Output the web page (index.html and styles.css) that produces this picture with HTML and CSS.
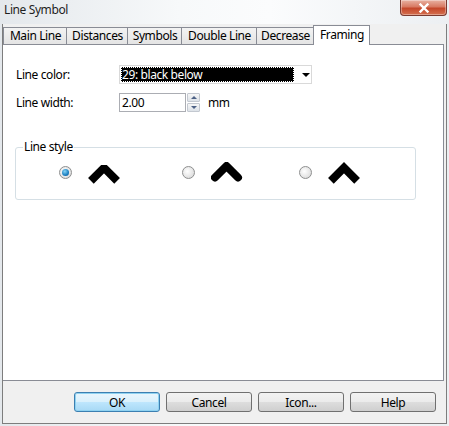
FILE: index.html
```html
<!DOCTYPE html>
<html lang="en">
<head>
    <meta charset="UTF-8">
    <title>Line Symbol</title>
    <link rel="stylesheet" href="styles.css">
</head>
<body>
    <div class="titlebar">
        <span class="title">Line Symbol</span>
        <div class="close-btn">
            <svg width="14" height="10" viewBox="0 0 14 10"><path d="M3.5 1.5 L10.5 8.5 M10.5 1.5 L3.5 8.5" stroke="#fff" stroke-width="2.4" stroke-linecap="square"/></svg>
        </div>
    </div>

    <div class="client">
        <div class="tabs">
            <div class="tab tab-main">Main Line</div>
            <div class="tab tab-distances">Distances</div>
            <div class="tab tab-symbols">Symbols</div>
            <div class="tab tab-double">Double Line</div>
            <div class="tab tab-decrease">Decrease</div>
            <div class="tab tab-framing active">Framing</div>
        </div>

        <div class="panel">
            <div class="row">
                <label class="field-label">Line color:</label>
                <div class="combo">
                    <span class="combo-value">29: black below</span>
                    <span class="combo-arrow"></span>
                </div>
            </div>
            <div class="row">
                <label class="field-label">Line width:</label>
                <div class="textbox">2.00</div>
                <div class="spinner">
                    <span class="spin-btn"><span class="spin-up"></span></span>
                    <span class="spin-btn"><span class="spin-down"></span></span>
                </div>
                <span class="unit">mm</span>
            </div>

            <div class="group">
                <span class="group-title">Line style</span>
                <div class="styles">
                    <!-- bevel join, butt ends -->
                    <div class="style-option">
                        <span class="radio checked"></span>
                        <svg width="33" height="23" viewBox="0 0 33 23"><polyline points="2.9,18.9 16,5.7 29.1,18.9" fill="none" stroke="#000" stroke-width="8" stroke-linejoin="bevel"/></svg>
                    </div>
                    <!-- round join, round ends -->
                    <div class="style-option">
                        <span class="radio"></span>
                        <svg width="33" height="23" viewBox="0 0 33 23"><polyline points="4,15.5 15.5,4 27,15.5" fill="none" stroke="#000" stroke-width="8" stroke-linejoin="round" stroke-linecap="round"/></svg>
                    </div>
                    <!-- miter join, butt ends -->
                    <div class="style-option">
                        <span class="radio"></span>
                        <svg width="33" height="23" viewBox="0 0 33 23"><polyline points="2.9,18.9 16,5.7 29.1,18.9" fill="none" stroke="#000" stroke-width="8" stroke-linejoin="miter"/></svg>
                    </div>
                </div>
            </div>
        </div>

        <div class="buttons">
            <button class="btn default">OK</button>
            <button class="btn">Cancel</button>
            <button class="btn">Icon...</button>
            <button class="btn">Help</button>
        </div>
    </div>
</body>
</html>
```

FILE: styles.css
```css
* {
    box-sizing: border-box;
}
html, body {
    margin: 0;
    padding: 0;
    height: 100%;
}
body {
    width: 449px;
    height: 426px;
    font-family: "Noto Sans", "Open Sans", sans-serif;
    font-size: 12px;
    letter-spacing: -0.4px;
    color: #000;
    background: linear-gradient(to right, #e4e8ec 0%, #f7f9fa 40%, #fbfcfd 60%, #eceff2 100%);
    overflow: hidden;
    display: flex;
    flex-direction: column;
}
.titlebar {
    height: 24px;
    flex-shrink: 0;
    display: flex;
    justify-content: space-between;
    align-items: flex-start;
    padding-left: 4px;
    padding-right: 2px;
}
.title {
    font-size: 12px;
    line-height: 16px;
    margin-top: 2px;
    color: #1e1e1e;
}
.close-btn {
    width: 47px;
    height: 16px;
    border: 1px solid #7a3a30;
    border-top: none;
    border-radius: 0 0 4px 4px;
    background: linear-gradient(to bottom, #e9b2a2 0%, #d87a62 45%, #c4472a 55%, #d4704f 100%);
    box-shadow: inset 0 0 0 1px rgba(255, 255, 255, 0.35);
    display: flex;
    align-items: center;
    justify-content: center;
}
.client {
    flex: 1;
    margin: 0 2px 2px 2px;
    background: #f0f0f0;
    border: 1px solid #7d7d7d;
    border-top: none;
    display: flex;
    flex-direction: column;
}
.tabs {
    display: flex;
    align-items: flex-end;
    height: 20px;
    flex-shrink: 0;
}
.tab {
    height: 17px;
    line-height: 16px;
    padding: 0 0 0 1px;
    text-align: center;
    border: 1px solid #898c95;
    border-bottom: none;
    margin-right: -1px;
    background: linear-gradient(to bottom, #f3f3f3, #e4e4e4);
    white-space: nowrap;
}
.tab-main { width: 64px; }
.tab-distances { width: 62px; }
.tab-symbols { width: 55px; }
.tab-double { width: 76px; }
.tab-decrease { width: 58px; }
.tab-framing { width: 57px; }
.tab.active {
    height: 20px;
    line-height: 17px;
    margin-bottom: -1px;
    background: #fff;
    position: relative;
    z-index: 1;
}
.panel {
    height: 337px;
    flex-shrink: 0;
    margin-right: 2px;
    background: #fff;
    border: 1px solid #898c95;
    border-left: none;
    padding: 20px 0 0 13px;
}
.row {
    display: flex;
    align-items: center;
    height: 19px;
    margin-bottom: 9px;
}
.field-label {
    width: 103px;
}
.combo {
    width: 193px;
    height: 19px;
    border: 1px solid #d9d9d9;
    display: flex;
    align-items: center;
    padding: 0 1px;
}
.combo-value {
    width: 173px;
    height: 15px;
    line-height: 13px;
    background: #000;
    color: #fff;
    border: 1px dotted #fff;
}
.combo-arrow {
    margin-left: 8px;
    width: 0;
    height: 0;
    border-left: 4px solid transparent;
    border-right: 4px solid transparent;
    border-top: 4px solid #000;
}
.textbox {
    width: 67px;
    height: 19px;
    line-height: 17px;
    border: 1px solid #abadb3;
    padding-left: 2px;
}
.spinner {
    display: flex;
    flex-direction: column;
    margin-left: 1px;
    gap: 1px;
}
.spin-btn {
    width: 13px;
    height: 9px;
    border: 1px solid #c3c8d0;
    border-radius: 1px;
    background: linear-gradient(#f6f6f6, #dde2e8);
    display: flex;
    align-items: center;
    justify-content: center;
}
.spin-up, .spin-down {
    width: 0;
    height: 0;
    border-left: 3px solid transparent;
    border-right: 3px solid transparent;
}
.spin-up {
    border-bottom: 3px solid #4d6185;
}
.spin-down {
    border-top: 3px solid #4d6185;
}
.unit {
    margin-left: 8px;
}
.group {
    position: relative;
    width: 401px;
    height: 53px;
    margin: 35px 0 0 -1px;
    border: 1px solid #d5dfe5;
    border-radius: 3px;
    padding: 14px 0 0 43px;
}
.group-title {
    position: absolute;
    top: -9px;
    left: 7px;
    padding: 0 1px;
    line-height: 16px;
    background: #fff;
}
.styles {
    display: flex;
}
.style-option {
    display: flex;
    align-items: flex-start;
    width: 117px;
    gap: 16px;
}
.style-option:first-child {
    width: 124px;
}
.radio {
    width: 13px;
    height: 13px;
    margin-top: 4px;
    border-radius: 50%;
    border: 1px solid #8e8f8f;
    background: radial-gradient(circle at 40% 40%, #fff, #d3d3d3);
    display: flex;
    align-items: center;
    justify-content: center;
}
.radio.checked::after {
    content: "";
    width: 7px;
    height: 7px;
    border-radius: 50%;
    background: radial-gradient(circle at 40% 35%, #86d4f6, #1a7ec0 60%, #0d4f86);
}
.buttons {
    flex: 1;
    display: flex;
    justify-content: flex-end;
    align-items: center;
    gap: 6px;
    padding-right: 10px;
}
.btn {
    width: 86px;
    height: 20px;
    font-family: inherit;
    font-size: 12px;
    letter-spacing: -0.4px;
    border: 1px solid #707070;
    border-radius: 3px;
    background: linear-gradient(to bottom, #f2f2f2 0%, #ebebeb 50%, #dddddd 51%, #cfcfcf 100%);
    padding: 0;
}
.btn.default {
    border-color: #3c7fb1;
    box-shadow: inset 0 0 0 1px #8fd2f1;
    background: linear-gradient(to bottom, #eaf6fd 0%, #d9f0fc 50%, #bee6fd 51%, #a7d9f5 100%);
}
```
